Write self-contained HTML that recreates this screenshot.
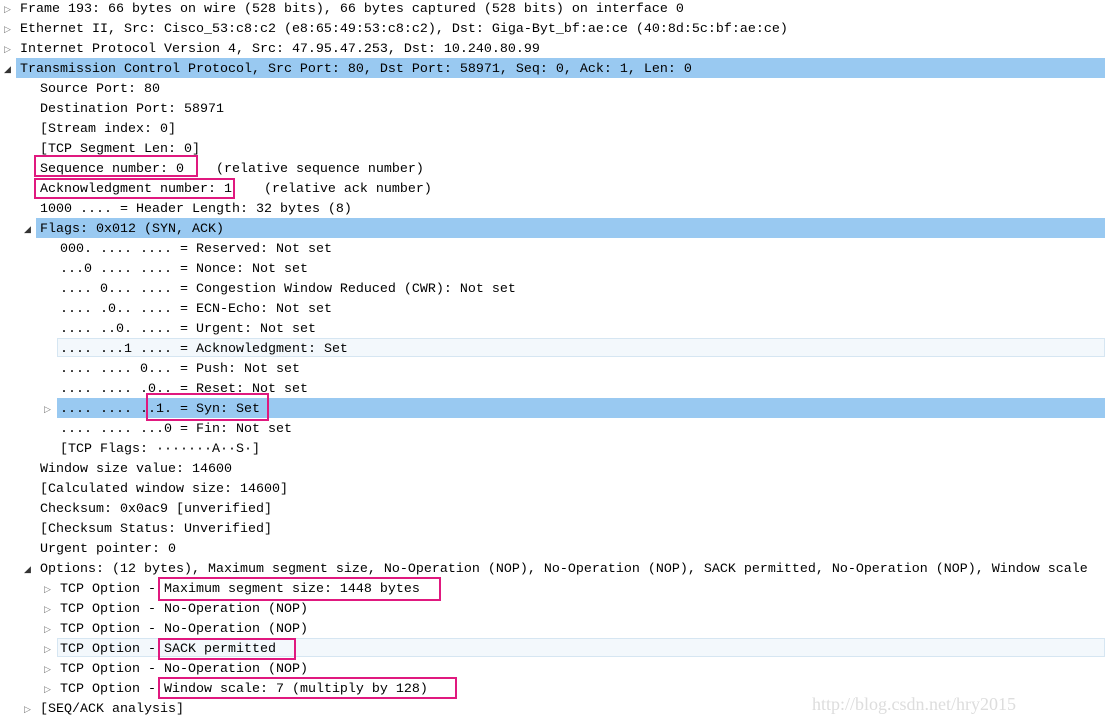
<!DOCTYPE html>
<html><head><meta charset="utf-8"><style>
body{margin:0;width:1105px;height:724px;background:#fff;overflow:hidden;position:relative;font-family:"Liberation Mono",monospace;font-size:13.33px;color:#000}
.r{position:absolute;left:0;right:0;height:20px;line-height:20px;white-space:pre}
.t{position:absolute;top:2px}
.a{position:absolute;top:2px;font-size:9px;color:#777;font-family:"DejaVu Sans",sans-serif}
.hl{position:absolute;top:0;right:0;height:20px;background:#99c9f1}
.hv{position:absolute;top:0;right:0;height:19px;border:1px solid #d6e6f2;background:#f3f8fc;box-sizing:border-box}
.b{position:absolute;border:2px solid #e0197f;box-sizing:border-box}
.wm{position:absolute;left:812px;top:694px;font-family:"Liberation Serif",serif;font-size:18px;color:#ddd}
</style></head><body>
<div class="r" style="top:-2px"><span class="a" style="left:4px">▷</span><span class="t" style="left:20px">Frame 193: 66 bytes on wire (528 bits), 66 bytes captured (528 bits) on interface 0</span></div>
<div class="r" style="top:18px"><span class="a" style="left:4px">▷</span><span class="t" style="left:20px">Ethernet II, Src: Cisco_53:c8:c2 (e8:65:49:53:c8:c2), Dst: Giga-Byt_bf:ae:ce (40:8d:5c:bf:ae:ce)</span></div>
<div class="r" style="top:38px"><span class="a" style="left:4px">▷</span><span class="t" style="left:20px">Internet Protocol Version 4, Src: 47.95.47.253, Dst: 10.240.80.99</span></div>
<div class="r" style="top:58px"><div class="hl" style="left:16px"></div><span class="a" style="left:4px;color:#333">◢</span><span class="t" style="left:20px">Transmission Control Protocol, Src Port: 80, Dst Port: 58971, Seq: 0, Ack: 1, Len: 0</span></div>
<div class="r" style="top:78px"><span class="t" style="left:40px">Source Port: 80</span></div>
<div class="r" style="top:98px"><span class="t" style="left:40px">Destination Port: 58971</span></div>
<div class="r" style="top:118px"><span class="t" style="left:40px">[Stream index: 0]</span></div>
<div class="r" style="top:138px"><span class="t" style="left:40px">[TCP Segment Len: 0]</span></div>
<div class="r" style="top:158px"><span class="t" style="left:40px">Sequence number: 0    (relative sequence number)</span></div>
<div class="r" style="top:178px"><span class="t" style="left:40px">Acknowledgment number: 1    (relative ack number)</span></div>
<div class="r" style="top:198px"><span class="t" style="left:40px">1000 .... = Header Length: 32 bytes (8)</span></div>
<div class="r" style="top:218px"><div class="hl" style="left:36px"></div><span class="a" style="left:24px;color:#333">◢</span><span class="t" style="left:40px">Flags: 0x012 (SYN, ACK)</span></div>
<div class="r" style="top:238px"><span class="t" style="left:60px">000. .... .... = Reserved: Not set</span></div>
<div class="r" style="top:258px"><span class="t" style="left:60px">...0 .... .... = Nonce: Not set</span></div>
<div class="r" style="top:278px"><span class="t" style="left:60px">.... 0... .... = Congestion Window Reduced (CWR): Not set</span></div>
<div class="r" style="top:298px"><span class="t" style="left:60px">.... .0.. .... = ECN-Echo: Not set</span></div>
<div class="r" style="top:318px"><span class="t" style="left:60px">.... ..0. .... = Urgent: Not set</span></div>
<div class="r" style="top:338px"><div class="hv" style="left:57px"></div><span class="t" style="left:60px">.... ...1 .... = Acknowledgment: Set</span></div>
<div class="r" style="top:358px"><span class="t" style="left:60px">.... .... 0... = Push: Not set</span></div>
<div class="r" style="top:378px"><span class="t" style="left:60px">.... .... .0.. = Reset: Not set</span></div>
<div class="r" style="top:398px"><div class="hl" style="left:57px"></div><span class="a" style="left:44px">▷</span><span class="t" style="left:60px">.... .... ..1. = Syn: Set</span></div>
<div class="r" style="top:418px"><span class="t" style="left:60px">.... .... ...0 = Fin: Not set</span></div>
<div class="r" style="top:438px"><span class="t" style="left:60px">[TCP Flags: ·······A··S·]</span></div>
<div class="r" style="top:458px"><span class="t" style="left:40px">Window size value: 14600</span></div>
<div class="r" style="top:478px"><span class="t" style="left:40px">[Calculated window size: 14600]</span></div>
<div class="r" style="top:498px"><span class="t" style="left:40px">Checksum: 0x0ac9 [unverified]</span></div>
<div class="r" style="top:518px"><span class="t" style="left:40px">[Checksum Status: Unverified]</span></div>
<div class="r" style="top:538px"><span class="t" style="left:40px">Urgent pointer: 0</span></div>
<div class="r" style="top:558px"><span class="a" style="left:24px;color:#333">◢</span><span class="t" style="left:40px">Options: (12 bytes), Maximum segment size, No-Operation (NOP), No-Operation (NOP), SACK permitted, No-Operation (NOP), Window scale</span></div>
<div class="r" style="top:578px"><span class="a" style="left:44px">▷</span><span class="t" style="left:60px">TCP Option - Maximum segment size: 1448 bytes</span></div>
<div class="r" style="top:598px"><span class="a" style="left:44px">▷</span><span class="t" style="left:60px">TCP Option - No-Operation (NOP)</span></div>
<div class="r" style="top:618px"><span class="a" style="left:44px">▷</span><span class="t" style="left:60px">TCP Option - No-Operation (NOP)</span></div>
<div class="r" style="top:638px"><div class="hv" style="left:57px"></div><span class="a" style="left:44px">▷</span><span class="t" style="left:60px">TCP Option - SACK permitted</span></div>
<div class="r" style="top:658px"><span class="a" style="left:44px">▷</span><span class="t" style="left:60px">TCP Option - No-Operation (NOP)</span></div>
<div class="r" style="top:678px"><span class="a" style="left:44px">▷</span><span class="t" style="left:60px">TCP Option - Window scale: 7 (multiply by 128)</span></div>
<div class="r" style="top:698px"><span class="a" style="left:24px">▷</span><span class="t" style="left:40px">[SEQ/ACK analysis]</span></div>
<div class="b" style="left:34px;top:155px;width:164px;height:22px"></div>
<div class="b" style="left:34px;top:178px;width:201px;height:21px"></div>
<div class="b" style="left:146px;top:393px;width:123px;height:28px"></div>
<div class="b" style="left:158px;top:577px;width:283px;height:24px"></div>
<div class="b" style="left:158px;top:638px;width:138px;height:22px"></div>
<div class="b" style="left:158px;top:677px;width:299px;height:22px"></div>
<div class="wm">http://blog.csdn.net/hry2015</div>
</body></html>
